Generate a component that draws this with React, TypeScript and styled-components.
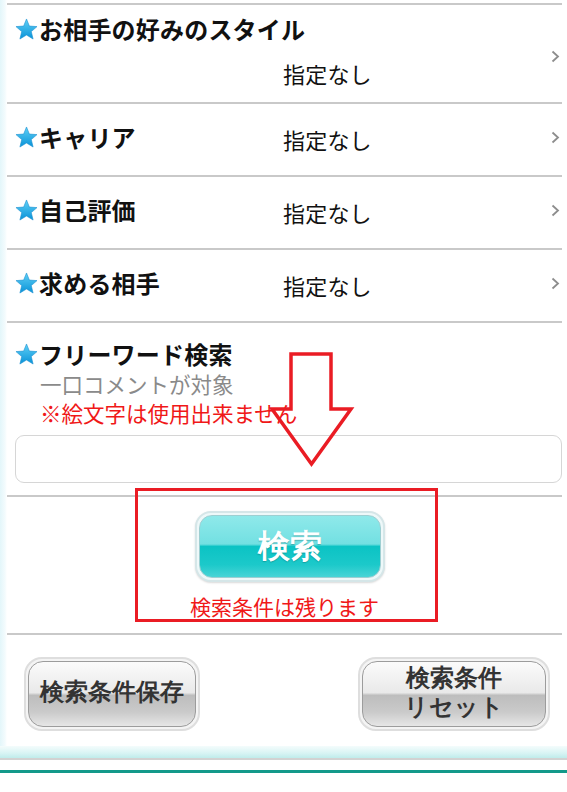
import styled, { createGlobalStyle } from "styled-components";

const GlobalStyle = createGlobalStyle`
  html, body {
    margin: 0;
    padding: 0;
    background: #ffffff;
  }
  body {
    font-family: "Noto Sans CJK JP", "Noto Sans", sans-serif;
    color: #111;
  }
`;

const Page = styled.div`
  position: relative;
  width: 567px;
  height: 792px;
  overflow: hidden;
  background: #fff;
`;

const Panel = styled.div`
  padding-left: 7px;
  padding-right: 5px;
  background: linear-gradient(to right, #e3f6fa 0, #f3fbfd 5px, #ffffff 7px);
`;

const TopEdge = styled.div`
  height: 3px;
  border-bottom: 2px solid #c9c9c9;
`;

const Row = styled.div<{ $stacked?: boolean }>`
  display: flex;
  align-items: center;
  box-sizing: border-box;
  height: ${(p) => (p.$stacked ? "99px" : "73px")};
  padding: 0 2px ${(p) => (p.$stacked ? "0" : "5px")} 8px;
  border-bottom: 2px solid #c9c9c9;
`;

const RowBody = styled.div<{ $stacked?: boolean }>`
  flex: 1;
  display: flex;
  flex-direction: ${(p) => (p.$stacked ? "column" : "row")};
  align-items: ${(p) => (p.$stacked ? "flex-start" : "center")};
  padding-bottom: ${(p) => (p.$stacked ? "6px" : "0")};
`;

const ChevronSlot = styled.div<{ $stacked?: boolean }>`
  display: flex;
  align-items: center;
  padding-top: ${(p) => (p.$stacked ? "6px" : "0")};
`;

const Title = styled.div<{ $stacked?: boolean }>`
  display: flex;
  align-items: center;
  width: ${(p) => (p.$stacked ? "auto" : "268px")};
  font-size: 24px;
  font-weight: 700;
  line-height: 28px;
  letter-spacing: 0.2px;
  color: #111;
`;

const Value = styled.div<{ $stacked?: boolean }>`
  font-size: 22px;
  line-height: 28px;
  letter-spacing: 0.2px;
  color: #111;
  margin-top: ${(p) => (p.$stacked ? "16px" : "3px")};
  padding-left: ${(p) => (p.$stacked ? "268px" : "0")};
`;

const StarIcon = styled.svg`
  width: 23px;
  height: 22px;
  margin-right: 1px;
  flex-shrink: 0;
`;

const Chevron = styled.svg`
  width: 9px;
  height: 13px;
  flex-shrink: 0;
`;

const FreeWord = styled.div`
  padding: 17px 0 12px 8px;
  border-bottom: 2px solid #c9c9c9;
`;

const Hint = styled.div<{ $tone: "gray" | "red" }>`
  padding-left: 25px;
  font-size: 21.5px;
  line-height: 30px;
  color: ${(p) => (p.$tone === "red" ? "#f01818" : "#8a8a8a")};
  margin-top: ${(p) => (p.$tone === "red" ? "-1px" : "1px")};
`;

const TextBox = styled.input`
  display: block;
  box-sizing: border-box;
  width: 547px;
  height: 48px;
  margin-top: 7px;
  border: 1px solid #d6d6d6;
  border-radius: 9px;
  background: #fff;
  font-size: 20px;
  font-family: inherit;
  outline: none;
`;

const SearchArea = styled.div`
  display: flex;
  flex-direction: column;
  align-items: center;
  padding: 14px 0 13px;
  border-bottom: 2px solid #c9c9c9;
`;

const SearchButton = styled.button`
  box-sizing: border-box;
  width: 190px;
  height: 71px;
  margin-left: 11px;
  border: 2px solid #d5e6e8;
  border-radius: 16px;
  padding: 2px;
  background: #eef8f9;
  cursor: pointer;
  box-shadow: 0 1px 2px rgba(0, 0, 0, 0.15);
`;

const SearchFace = styled.span`
  display: flex;
  align-items: center;
  justify-content: center;
  height: 100%;
  border-radius: 13px;
  border: 1px solid #9ecfd2;
  box-sizing: border-box;
  background: linear-gradient(
    to bottom,
    #8fe9ea 0%,
    #72e0e2 46%,
    #0bc3c4 50%,
    #1cc9ca 80%,
    #49d4d6 100%
  );
  font-family: inherit;
  font-size: 32px;
  font-weight: 700;
  color: #ffffff;
  letter-spacing: 0.5px;
  text-shadow: 0 1px 1px rgba(0, 90, 90, 0.35);
`;

const Note = styled.div`
  margin-top: 10px;
  font-size: 21px;
  line-height: 28px;
  color: #f01818;
`;

const ButtonBar = styled.div`
  display: flex;
  justify-content: space-between;
  align-items: center;
  padding: 22px 12px 15px 17px;
`;

const GrayButton = styled.button<{ $w: number }>`
  box-sizing: border-box;
  width: ${(p) => p.$w}px;
  height: 74px;
  padding: 2px;
  border: 2px solid #dedede;
  border-radius: 18px;
  background: #f4f4f4;
  cursor: pointer;
`;

const GrayFace = styled.span`
  display: flex;
  align-items: center;
  justify-content: center;
  height: 100%;
  box-sizing: border-box;
  padding-bottom: 5px;
  border: 1px solid #9c9c9c;
  border-radius: 15px;
  background: linear-gradient(
    to bottom,
    #fbfbfb 0%,
    #e9e9e9 48%,
    #bdbdbd 52%,
    #cacaca 78%,
    #e6e6e6 100%
  );
  font-family: inherit;
  font-size: 24px;
  font-weight: 700;
  line-height: 29px;
  color: #333;
  text-align: center;
`;

const Footer = styled.div`
  height: 12px;
  background: linear-gradient(to bottom, #f4fcfc 0%, #d8f4f4 60%, #bfeceb 100%);
  border-bottom: 2px solid #d2d2d2;
`;

const FooterLine = styled.div`
  margin-top: 10px;
  height: 3px;
  background: #13998a;
`;

const Overlay = styled.div`
  position: absolute;
  inset: 0;
  pointer-events: none;
`;

const Frame = styled.div`
  position: absolute;
  left: 135px;
  top: 488px;
  width: 303px;
  height: 134px;
  box-sizing: border-box;
  border: 3px solid #ea1c24;
`;

const ArrowSvg = styled.svg`
  position: absolute;
  left: 0;
  top: 0;
`;

const Star = () => (
  <StarIcon viewBox="0 0 24 23">
    <defs>
      <linearGradient id="starGrad" x1="0" y1="0" x2="0" y2="1">
        <stop offset="0" stopColor="#5fd0f6" />
        <stop offset="1" stopColor="#0a93d8" />
      </linearGradient>
    </defs>
    <polygon
      points="12,1 15,8.4 23,9 17,14.2 18.9,22 12,17.8 5.1,22 7,14.2 1,9 9,8.4"
      fill="url(#starGrad)"
      stroke="#1a8fd0"
      strokeWidth="0.6"
      strokeLinejoin="round"
    />
  </StarIcon>
);

const Arrow = () => (
  <Chevron viewBox="0 0 9 13">
    <polyline
      points="1.5,1.5 7,6.5 1.5,11.5"
      fill="none"
      stroke="#8d8d8d"
      strokeWidth="1.8"
    />
  </Chevron>
);

type Condition = { label: string; value: string; stacked?: boolean };

const conditions: Condition[] = [
  { label: "お相手の好みのスタイル", value: "指定なし", stacked: true },
  { label: "キャリア", value: "指定なし" },
  { label: "自己評価", value: "指定なし" },
  { label: "求める相手", value: "指定なし" },
];

export default function App() {
  return (
    <Page>
      <GlobalStyle />
      <Panel>
        <TopEdge />
        {conditions.map((c) => (
          <Row key={c.label} $stacked={c.stacked}>
            <RowBody $stacked={c.stacked}>
              <Title $stacked={c.stacked}>
                <Star />
                {c.label}
              </Title>
              <Value $stacked={c.stacked}>{c.value}</Value>
            </RowBody>
            <ChevronSlot $stacked={c.stacked}>
              <Arrow />
            </ChevronSlot>
          </Row>
        ))}
        <FreeWord>
          <Title $stacked>
            <Star />
            フリーワード検索
          </Title>
          <Hint $tone="gray">一口コメントが対象</Hint>
          <Hint $tone="red">※絵文字は使用出来ません</Hint>
          <TextBox type="text" />
        </FreeWord>
        <SearchArea>
          <SearchButton>
            <SearchFace>検索</SearchFace>
          </SearchButton>
          <Note>検索条件は残ります</Note>
        </SearchArea>
        <ButtonBar>
          <GrayButton $w={176}>
            <GrayFace>検索条件保存</GrayFace>
          </GrayButton>
          <GrayButton $w={192}>
            <GrayFace>
              検索条件
              <br />
              リセット
            </GrayFace>
          </GrayButton>
        </ButtonBar>
      </Panel>
      <Footer />
      <FooterLine />
      <Overlay>
        <Frame />
        <ArrowSvg width="567" height="792" viewBox="0 0 567 792">
          <polygon
            points="291,354 331,354 331,409 351,409 311.5,464 272,409 291,409"
            fill="none"
            stroke="#ea1c24"
            strokeWidth="3.5"
            strokeLinejoin="miter"
          />
        </ArrowSvg>
      </Overlay>
    </Page>
  );
}
